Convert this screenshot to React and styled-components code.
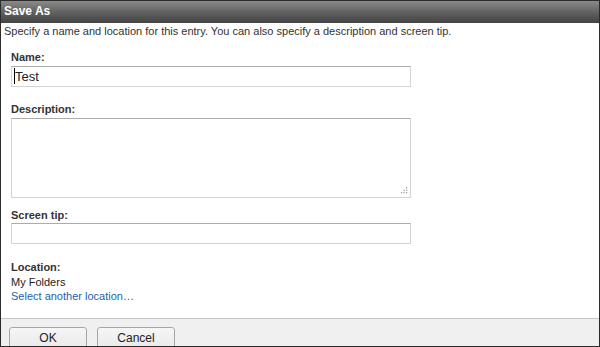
import React from 'react';
import styled, { createGlobalStyle } from 'styled-components';

const GlobalStyle = createGlobalStyle`
  html, body {
    margin: 0;
    padding: 0;
    background: #ffffff;
  }
  body {
    font-family: "Liberation Sans", Arial, sans-serif;
    font-size: 11px;
    color: #333333;
  }
`;

const Dialog = styled.div`
  width: 600px;
  height: 347px;
  box-sizing: border-box;
  border: 1px solid #2b2b2b;
  display: flex;
  flex-direction: column;
  overflow: hidden;
  background: #ffffff;
`;

const TitleBar = styled.div`
  height: 22px;
  flex-shrink: 0;
  box-sizing: border-box;
  padding: 3px 3px 0;
  background: linear-gradient(to bottom, #8a8a8a 0%, #5e5e5e 55%, #444444 100%);
  color: #ffffff;
  font-weight: bold;
  font-size: 12px;
  line-height: 14px;
`;

const Body = styled.div`
  flex: 1;
  padding: 1px 3px 0;
`;

const Intro = styled.div`
  line-height: 14px;
`;

const Form = styled.div`
  padding: 12px 0 0 7px;
  display: flex;
  flex-direction: column;
`;

const Group = styled.div`
  display: flex;
  flex-direction: column;
  margin-top: ${p => p.gap || 0}px;
`;

const Label = styled.label`
  font-weight: bold;
  line-height: 14px;
  margin-bottom: ${p => p.space || 2}px;
`;

const FieldBox = styled.div`
  position: relative;
  width: 400px;
`;

const TextInput = styled.input`
  display: block;
  width: 400px;
  height: 21px;
  box-sizing: border-box;
  border: 1px solid #d4d4d4;
  border-top-color: #ababab;
  padding: 0 3px;
  font-family: "Liberation Sans", Arial, sans-serif;
  font-size: 13px;
  color: #222222;
  outline: none;
  background: #ffffff;
`;

const Caret = styled.span`
  position: absolute;
  left: 3px;
  top: 2px;
  width: 1px;
  height: 16px;
  background: #000000;
`;

const TextArea = styled.textarea`
  display: block;
  width: 400px;
  height: 80px;
  box-sizing: border-box;
  border: 1px solid #d4d4d4;
  border-top-color: #ababab;
  resize: none;
  outline: none;
  font-family: "Liberation Sans", Arial, sans-serif;
  font-size: 13px;
  margin: 0;
`;

const Grip = styled.svg`
  position: absolute;
  right: 3px;
  bottom: 3px;
  width: 8px;
  height: 8px;
`;

const Text = styled.div`
  line-height: 14px;
  color: #222222;
`;

const Link = styled.a`
  line-height: 15px;
  color: #1f5fa6;
  text-decoration: none;
  cursor: pointer;
`;

const Footer = styled.div`
  height: 28px;
  box-sizing: border-box;
  flex-shrink: 0;
  border-top: 1px solid #c4c4c4;
  background: #f0f0f0;
  padding: 8px 0 0 8px;
  display: flex;
  align-items: flex-start;
  gap: 10px;
  overflow: hidden;
`;

const Button = styled.button`
  width: 78px;
  height: 24px;
  flex-shrink: 0;
  box-sizing: border-box;
  border: 1px solid #a6a6a6;
  border-radius: 3px;
  background: linear-gradient(to bottom, #f6f6f6 0%, #e8e8e8 100%);
  font-family: "Liberation Sans", Arial, sans-serif;
  font-size: 12px;
  color: #222222;
  padding: 0 0 2px;
  text-align: center;
  line-height: 18px;
`;

const dots = [[6, 0], [6, 2.5], [3.5, 2.5], [6, 5], [3.5, 5], [1, 5]];

export default function App() {
  return (
    <>
      <GlobalStyle />
      <Dialog>
        <TitleBar>Save As</TitleBar>
        <Body>
          <Intro>Specify a name and location for this entry. You can also specify a description and screen tip.</Intro>
          <Form>
            <Group>
              <Label>Name:</Label>
              <FieldBox>
                <TextInput readOnly value="Test" />
                <Caret />
              </FieldBox>
            </Group>
            <Group gap={15}>
              <Label space={2}>Description:</Label>
              <FieldBox>
                <TextArea readOnly />
                <Grip viewBox="0 0 8 8">
                  {dots.map(([x, y], i) => (
                    <rect key={i} x={x} y={y} width="1.3" height="1.3" fill="#a8a8a8" />
                  ))}
                </Grip>
              </FieldBox>
            </Group>
            <Group gap={10}>
              <Label space={1}>Screen tip:</Label>
              <TextInput readOnly value="" />
            </Group>
            <Group gap={16}>
              <Label space={1}>Location:</Label>
              <Text>My Folders</Text>
              <Link>Select another location…</Link>
            </Group>
          </Form>
        </Body>
        <Footer>
          <Button>OK</Button>
          <Button>Cancel</Button>
        </Footer>
      </Dialog>
    </>
  );
}
